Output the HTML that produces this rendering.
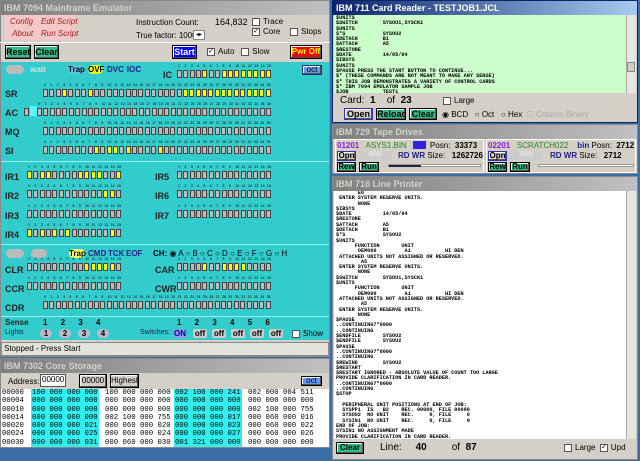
<!DOCTYPE html><html><head><meta charset="utf-8"><style>
*{box-sizing:border-box;margin:0;padding:0}
body{width:640px;height:461px;overflow:hidden;background:#3a6ea5;font-family:"Liberation Sans",sans-serif;font-size:9px;position:relative}
.a{position:absolute}
.tg{background:linear-gradient(90deg,#808080,#c0c0c0);color:#d4d0c8;font-weight:bold;font-size:9px;padding-left:3px;line-height:14px;height:14px}
.tb{background:linear-gradient(90deg,#0a246a,#a6caf0);color:#fff;font-weight:bold;font-size:9px;padding-left:3px;line-height:14px;height:14px}
.gray{background:#d4d0c8}
.cy{background:#33cccc}
.cell{position:absolute;width:5px;height:8px;background:#bdbdbd;border:1px solid #444}
.y{background:#ffff00}
.lbl{position:absolute;font-weight:bold;font-size:9px;color:#222}
.btn{position:absolute;border:1px solid #000;box-shadow:inset -1px -1px #555,inset 1px 1px #fff;font-weight:bold;text-align:center;font-size:9px;white-space:nowrap;overflow:hidden}
.mono{font-family:"Liberation Mono",monospace}
pre{font-family:"Liberation Mono",monospace;font-size:5.2px;line-height:5.3px;color:#000;font-weight:bold}
.bn{position:absolute;font-size:3.5px;color:#000;white-space:nowrap}
.pill{position:absolute;border-radius:5px;font-weight:bold;font-size:8px;text-align:center;line-height:9px;height:9px}
.cb{display:inline-block;width:8px;height:8px;background:#fff;border:1px solid #555;vertical-align:middle;margin-right:3px;font-size:7px;line-height:6px;text-align:center}
.sb{position:absolute;background:#e8e6e0;border-left:1px solid #aaa}
</style></head><body>

<!-- LEFT WINDOW -->
<div class="a gray" style="left:0;top:0;width:330px;height:357px;border:1px solid #888"></div>
<div class="a tg" style="left:1px;top:1px;width:328px">IBM 7094 Mainframe Emulator</div>
<div class="a" style="left:5px;top:15px;width:70px;height:25px;background:#f4c8c8"></div>
<div class="a" style="left:10px;top:16px;color:#a02020;font-style:italic;font-size:8px;line-height:12px">Config<br>&nbsp;About</div>
<div class="a" style="left:41px;top:16px;color:#a02020;font-style:italic;font-size:8px;line-height:12px">Edit Script<br>Run Script</div>
<div class="a" style="left:136px;top:16px;font-size:8px;line-height:13px">Instruction Count:<br>True factor: 1000</div>
<div class="a" style="left:193px;top:30px;width:12px;height:10px;background:#fff;border:1px solid #888;font-size:6px;text-align:center">◂▸</div>
<div class="a" style="left:215px;top:17px;font-size:9px">164,832</div>
<div class="a" style="left:252px;top:17px;font-size:8px;line-height:10px"><span class="cb"></span>Trace<br><span class="cb">✓</span>Core</div>
<div class="a" style="left:290px;top:27px;font-size:8px"><span class="cb"></span>Stops</div>
<div class="a" style="left:0;top:42px;width:330px;height:1px;background:#fff"></div>
<div class="btn" style="left:5px;top:45px;width:26px;height:14px;background:#33bb88;line-height:12px">Reset</div>
<div class="btn" style="left:34px;top:45px;width:25px;height:14px;background:#33bb88;line-height:12px">Clear</div>
<div class="btn" style="left:172px;top:45px;width:25px;height:14px;background:#0000ee;color:#fff;line-height:12px">Start</div>
<div class="a" style="left:207px;top:47px;font-size:8px"><span class="cb">✓</span>Auto &nbsp; <span class="cb"></span>Slow</div>
<div class="btn" style="left:290px;top:45px;width:32px;height:14px;background:#ee0000;color:#ff0;line-height:12px;font-size:8px">Pwr Off</div>

<div class="a cy" style="left:1px;top:62px;width:328px;height:278px"></div>
<div class="a" style="left:1px;top:161px;width:328px;height:1px;background:#9ee"></div>
<div class="a" style="left:1px;top:244px;width:328px;height:1px;background:#9ee"></div>
<div class="a" style="left:1px;top:316px;width:328px;height:1px;background:#9ee"></div>
<div class="pill" style="left:6px;top:65px;width:18px;background:#bbb"></div>
<div class="pill" style="left:30px;top:65px;width:16px;color:#ddd">wait</div>
<div class="pill" style="left:68px;top:65px;width:17px;color:#003;background:#5cc">Trap</div>
<div class="pill" style="left:88px;top:65px;width:15px;background:#ff0;color:#000">OVF</div>
<div class="pill" style="left:107px;top:65px;width:16px;color:#228">DVC</div>
<div class="pill" style="left:126px;top:65px;width:16px;color:#228">IOC</div>
<div class="btn" style="left:302px;top:65px;width:20px;height:10px;background:#6699ee;font-weight:normal;font-size:8px;line-height:8px;border-color:#236">oct</div>
<div class="a" style="left:30px;top:106px;width:7px;height:10px;background:#5ff"></div>

<div class="pill" style="left:6px;top:249px;width:18px;background:#bbb"></div>
<div class="pill" style="left:31px;top:249px;width:16px;background:#bbb"></div>
<div class="pill" style="left:69px;top:249px;width:16px;background:#ff6;color:#000">Trap</div>
<div class="pill" style="left:88px;top:249px;width:18px;color:#228">CMD</div>
<div class="pill" style="left:108px;top:249px;width:15px;color:#228">TCK</div>
<div class="pill" style="left:126px;top:249px;width:16px;color:#228">EOF</div>
<div class="a" style="left:153px;top:249px;font-size:8px;font-weight:bold;white-space:nowrap">CH: <span style="font-weight:normal">◉ A ○ B ○ C ○ D ○ E ○ F ○ G ○ H</span></div>

<div class="lbl" style="left:5px;top:318px;font-size:8px">Sense</div>
<div class="a" style="left:5px;top:329px;font-size:7px;color:#225">Lights</div>
<div class="a" style="left:43px;top:318px;font-weight:bold;font-size:8px;word-spacing:11px">1 2 3 4</div>
<div class="pill" style="left:40px;top:329px;width:12px;background:#bbc">1</div>
<div class="pill" style="left:59px;top:329px;width:12px;background:#bbc">2</div>
<div class="pill" style="left:78px;top:329px;width:12px;background:#bbc">3</div>
<div class="pill" style="left:97px;top:329px;width:12px;background:#bbc">4</div>
<div class="a" style="left:140px;top:329px;font-size:7px;color:#225">Switches:</div>
<div class="a" style="left:177px;top:318px;font-weight:bold;font-size:8px;word-spacing:11px">1 2 3 4 5 6</div>
<div class="pill" style="left:174px;top:329px;width:12px;background:#99e;color:#00a;border-radius:2px">ON</div>
<div class="pill" style="left:193px;top:329px;width:14px;background:#ccc;border-radius:2px">off</div>
<div class="pill" style="left:212px;top:329px;width:14px;background:#ccc;border-radius:2px">off</div>
<div class="pill" style="left:231px;top:329px;width:14px;background:#ccc;border-radius:2px">off</div>
<div class="pill" style="left:250px;top:329px;width:14px;background:#ccc;border-radius:2px">off</div>
<div class="pill" style="left:269px;top:329px;width:14px;background:#ccc;border-radius:2px">off</div>
<div class="a" style="left:292px;top:329px;font-size:8px"><span class="cb"></span>Show</div>
<div class="a" style="left:1px;top:342px;width:328px;height:14px;border:1px solid #888;font-size:8px;line-height:12px;padding-left:2px;background:#e4e2dc">Stopped - Press Start</div>
<div id="cells"></div>

<!-- CORE STORAGE -->
<div class="a gray" style="left:0;top:358px;width:330px;height:90px;border:1px solid #888"></div>
<div class="a tg" style="left:1px;top:359px;width:328px">IBM 7302 Core Storage</div>
<div class="a" style="left:8px;top:377px;font-size:8px">Address:</div>
<div class="a" style="left:40px;top:374px;width:26px;height:13px;background:#fff;border:1px solid #555;font-size:8px;padding-left:1px">00000</div>
<div class="btn" style="left:79px;top:374px;width:28px;height:14px;font-weight:normal;font-size:8px;line-height:12px;background:#d4d0c8">00000</div>
<div class="btn" style="left:110px;top:374px;width:29px;height:14px;font-weight:normal;font-size:8px;line-height:12px;background:#d4d0c8">Highest</div>
<div class="btn" style="left:301px;top:376px;width:21px;height:10px;background:#6699ee;font-weight:normal;font-size:8px;line-height:8px">oct</div>
<div class="a mono" id="core" style="left:1px;top:389px;width:328px;height:58px;background:#fff;font-size:7.3px;line-height:8.3px;overflow:hidden"></div>

<!-- CARD READER -->
<div class="a gray" style="left:332px;top:0;width:306px;height:123px;border:1px solid #0a246a"></div>
<div class="a tb" style="left:333px;top:1px;width:304px">IBM 711 Card Reader - TESTJOB1.JCL</div>
<div class="a" style="left:334px;top:15px;width:292px;height:78px;background:#ccffcc;padding:1px 2px;overflow:hidden"><pre>$UNITS
$SWITCH        SYSOU1,SYSCK1
$UNITS
$*S            SYSOU2
$DETACH        B1
$ATTACH        A5
$RESTORE
$DATE          14/05/04
$IBSYS
$UNITS
$PAUSE PRESS THE START BUTTON TO CONTINUE...
$* (THESE COMMANDS ARE NOT MEANT TO MAKE ANY SENSE)
$* THIS JOB DEMONSTRATES A VARIETY OF CONTROL CARDS
$* IBM 7094 EMULATOR SAMPLE JOB
$JOB           TEST1</pre></div>
<div class="sb" style="left:626px;top:15px;width:10px;height:78px"></div>
<div class="a" style="left:627px;top:62px;width:8px;height:10px;background:#d4d0c8;border:1px solid #888"></div>
<div class="a" style="left:340px;top:95px;font-size:10px;white-space:nowrap">Card: &nbsp;<b>1</b> &nbsp; &nbsp;of &nbsp;<b>23</b></div>
<div class="a" style="left:443px;top:96px;font-size:8px"><span class="cb"></span>Large</div>
<div class="btn" style="left:344px;top:108px;width:29px;height:12px;background:#d4d0c8;line-height:10px;border-color:#3333aa">Open</div>
<div class="btn" style="left:376px;top:108px;width:30px;height:12px;background:#33bb88;line-height:10px">Reload</div>
<div class="btn" style="left:409px;top:108px;width:28px;height:12px;background:#33bb88;line-height:10px">Clear</div>
<div class="a" style="left:442px;top:110px;font-size:8px;white-space:nowrap">◉ BCD &nbsp; ○ Oct &nbsp; ○ Hex <span style="color:#aaa">&nbsp;☐ Column Binary</span></div>

<!-- TAPE -->
<div class="a gray" style="left:332px;top:124px;width:306px;height:50px;border:1px solid #888"></div>
<div class="a tg" style="left:333px;top:125px;width:304px">IBM 729 Tape Drives</div>
<div class="a" style="left:335px;top:139px;width:149px;height:34px;border:1px solid #fff"></div>
<div class="a" style="left:486px;top:139px;width:150px;height:34px;border:1px solid #fff"></div>
<div class="a" style="left:337px;top:141px;font-size:8px;white-space:nowrap"><b style="color:#8822cc">01201</b> &nbsp; <span style="color:#228822">ASYS1.BIN</span></div>
<div class="a" style="left:413px;top:141px;width:13px;height:8px;background:#3322dd"></div>
<div class="a" style="left:430px;top:141px;font-size:8px">Posn: &nbsp;<b>33373</b></div>
<div class="btn" style="left:337px;top:151px;width:19px;height:10px;line-height:8px;background:#d4d0c8;border-color:#3333aa;font-size:8px">Opn</div>
<div class="a" style="left:359px;top:151px;width:32px;height:9px;background:#ccc;color:#eee;font-size:7px;text-align:center">R/W</div>
<div class="a" style="left:398px;top:151px;font-size:8px;white-space:nowrap;color:#228"><b>RD WR</b> <span style="color:#000">Size: &nbsp; <b>1262726</b></span></div>
<div class="btn" style="left:337px;top:162px;width:19px;height:10px;line-height:8px;background:#33bb88;font-size:8px">Rew</div>
<div class="btn" style="left:359px;top:162px;width:20px;height:10px;line-height:8px;background:#33bb88;font-size:8px">Run</div>
<div class="a" style="left:388px;top:164px;width:93px;height:3px;background:#fff;border:1px solid #999"></div>
<div class="a" style="left:389px;top:165px;width:32px;height:2px;background:#224"></div>
<div class="a" style="left:488px;top:141px;font-size:8px;white-space:nowrap"><b style="color:#8822cc">02201</b> &nbsp; <span style="color:#228822">SCRATCH022</span> &nbsp;&nbsp; <b style="color:#228">bin</b> Posn: &nbsp;<b>2712</b></div>
<div class="btn" style="left:488px;top:151px;width:19px;height:10px;line-height:8px;background:#d4d0c8;border-color:#3333aa;font-size:8px">Opn</div>
<div class="a" style="left:510px;top:151px;width:32px;height:9px;background:#ccc;color:#eee;font-size:7px;text-align:center">R/W</div>
<div class="a" style="left:550px;top:151px;font-size:8px;white-space:nowrap;color:#228"><b>RD WR</b> <span style="color:#000">Size: &nbsp; <b>2712</b></span></div>
<div class="btn" style="left:488px;top:162px;width:19px;height:10px;line-height:8px;background:#33bb88;font-size:8px">Rew</div>
<div class="btn" style="left:510px;top:162px;width:20px;height:10px;line-height:8px;background:#33bb88;font-size:8px">Run</div>
<div class="a" style="left:538px;top:164px;width:96px;height:3px;background:#fff;border:1px solid #999"></div>

<!-- PRINTER -->
<div class="a gray" style="left:332px;top:176px;width:306px;height:284px;border:1px solid #888"></div>
<div class="a tg" style="left:333px;top:177px;width:304px">IBM 716 Line Printer</div>
<div class="a" style="left:334px;top:191px;width:292px;height:248px;background:#fff;padding:0 2px;overflow:hidden"><pre>       E0
 ENTER SYSTEM RESERVE UNITS.
       NONE
$IBSYS
$DATE          14/05/04
$RESTORE
$ATTACH        A5
$DETACH        B1
$*S            SYSOU2
$UNITS
      FUNCTION       UNIT
       OEM000         A1           HI DEN
 ATTACHED UNITS NOT ASSIGNED OR RESERVED.
        A5
 ENTER SYSTEM RESERVE UNITS.
       NONE
$SWITCH        SYSOU1,SYSCK1
$UNITS
      FUNCTION       UNIT
       OEM000         A1           HI DEN
 ATTACHED UNITS NOT ASSIGNED OR RESERVED.
        A5
 ENTER SYSTEM RESERVE UNITS.
       NONE
$PAUSE
..CONTINUING7*0000
..CONTINUING
$ENDFILE       SYSOU2
$ENDFILE       SYSOU2
$PAUSE
..CONTINUING7*0000
..CONTINUING
$REWIND        SYSOU2
$RESTART
$RESTART IGNORED - ABSOLUTE VALUE OF COUNT TOO LARGE
PROVIDE CLARIFICATION IN CARD READER.
..CONTINUING7*0000
..CONTINUING
$STOP

  PERIPHERAL UNIT POSITIONS AT END OF JOB:
  SYSPP1  IS   B2    REC. 00000, FILE 00000
  SYSOU2  NO UNIT    REC.     0, FILE     0
  SYSIN1  NO UNIT    REC.     0, FILE     0
END OF JOB:
SYSIN1 NO ASSIGNMENT MADE
PROVIDE CLARIFICATION IN CARD READER.
OPER. ACTION PAUSE</pre></div>
<div class="sb" style="left:626px;top:191px;width:10px;height:248px"></div>
<div class="btn" style="left:336px;top:442px;width:28px;height:12px;background:#33bb88;line-height:10px;font-size:8px">Clear</div>
<div class="a" style="left:380px;top:442px;font-size:10px;white-space:nowrap">Line: &nbsp; &nbsp; <b>40</b> &nbsp; &nbsp; &nbsp; &nbsp; of &nbsp;<b>87</b></div>
<div class="a" style="left:564px;top:443px;font-size:8px;white-space:nowrap"><span class="cb"></span>Large &nbsp;<span class="cb">✓</span>Upd</div>

<script>
var h='';
function row(x,y,n,lit,nums,start){for(var i=0;i<n;i++){var cx=x+i*6.36;h+='<div class="cell'+(lit.indexOf(i)>=0?' y':'')+'" style="left:'+cx.toFixed(1)+'px;top:'+y+'px"></div>';if(nums)h+='<div class="bn" style="left:'+(cx+1).toFixed(1)+'px;top:'+(y-6)+'px">'+(i+start)+'</div>';}}
function L(t,x,y){h+='<div class="lbl" style="left:'+x+'px;top:'+y+'px">'+t+'</div>';}
var r=[];for(var i=22;i<36;i++)r.push(i);
L('IC',163,70);row(177,70,15,[4,7,8,9,10,11,12,13,14],1,1);
L('SR',5,89);row(43,89,36,[3,7].concat(r),1,0);
L('AC',5,108);h+='<div class="cell" style="left:24px;top:108px"></div>';row(37,108,37,[],1,0);
L('MQ',5,127);row(43,127,36,[],1,0);
L('SI',5,146);row(43,146,36,[8,10,11,13,18],1,0);
L('IR1',5,172);row(27,171,15,[0,2,3,8,9,10,11,14],1,1);L('IR5',155,172);row(177,171,15,[],1,1);
L('IR2',5,191);row(27,190,15,[12,13],1,1);L('IR6',155,191);row(177,190,15,[],1,1);
L('IR3',5,211);row(27,210,15,[],1,1);L('IR7',155,211);row(177,210,15,[],1,1);
L('IR4',5,230);row(27,229,15,[0,2,4,6,13],1,1);
L('CLR',5,265);row(27,263,15,[9,10,11,12,13],1,1);L('CAR',155,265);row(177,263,15,[4,7,8,9,10],1,1);
L('CCR',5,284);row(27,282,15,[],1,1);L('CWR',155,284);row(177,282,15,[],1,1);
L('CDR',5,303);row(43,301,36,[],1,0);
document.getElementById('cells').innerHTML=h;
var d=[["00000","100 000 000 000","100 000 000 000","002 100 000 241","002 000 004 511"],
["00004","000 000 000 000","000 000 000 000","000 000 000 000","000 000 000 000"],
["00010","000 000 000 000","000 000 000 000","000 000 000 000","002 100 000 755"],
["00014","000 000 000 000","002 100 000 755","000 000 000 017","000 060 000 016"],
["00020","000 000 000 021","000 060 000 020","000 000 000 023","000 060 000 022"],
["00024","000 000 000 025","000 060 000 024","000 000 000 027","000 060 000 026"],
["00030","000 000 000 031","000 060 000 030","001 321 000 000","000 000 000 000"]];
var c='';d.forEach(function(r){c+='<div style="height:8.3px;white-space:nowrap;overflow:hidden"><span style="display:inline-block;width:30px;padding-left:1px">'+r[0]+'</span><span style="display:inline-block;width:68px;background:#33eeee;padding-left:1px">'+r[1]+'</span><span style="display:inline-block;width:75px;padding-left:6px">'+r[2]+'</span><span style="display:inline-block;width:68px;background:#33eeee;padding-left:1px">'+r[3]+'</span><span style="display:inline-block;padding-left:6px">'+r[4]+'</span></div>';});
document.getElementById('core').innerHTML=c;
</script>
</body></html>
